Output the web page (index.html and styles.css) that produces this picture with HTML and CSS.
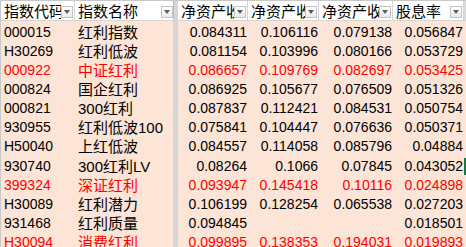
FILE: index.html
```html
<!DOCTYPE html>
<html lang="zh-CN">
<head>
<meta charset="utf-8">
<title>红利指数</title>
<link rel="stylesheet" href="styles.css">
</head>
<body>
<div class="sheet">
  <div class="row head">
    <div class="cell c1"><span class="t">指数代码</span><span class="dd"></span></div>
    <div class="cell c2"><span class="t">指数名称</span><span class="dd"></span></div>
    <div class="split"></div>
    <div class="cell num"><span class="t">净资产收益率</span><span class="dd"></span></div>
    <div class="cell num"><span class="t">净资产收益率</span><span class="dd"></span></div>
    <div class="cell num"><span class="t">净资产收益率</span><span class="dd"></span></div>
    <div class="cell num"><span class="t">股息率</span><span class="dd"></span></div>
    <div class="cell c7"></div>
  </div>

  <div class="row data">
    <div class="cell c1">000015</div><div class="cell c2">红利指数</div><div class="split"></div>
    <div class="cell num">0.084311</div><div class="cell num">0.106116</div><div class="cell num">0.079138</div><div class="cell num">0.056847</div><div class="cell c7"></div>
  </div>
  <div class="row data">
    <div class="cell c1">H30269</div><div class="cell c2">红利低波</div><div class="split"></div>
    <div class="cell num">0.081154</div><div class="cell num">0.103996</div><div class="cell num">0.080166</div><div class="cell num">0.053729</div><div class="cell c7"></div>
  </div>
  <div class="row data red">
    <div class="cell c1">000922</div><div class="cell c2">中证红利</div><div class="split"></div>
    <div class="cell num">0.086657</div><div class="cell num">0.109769</div><div class="cell num">0.082697</div><div class="cell num">0.053425</div><div class="cell c7"></div>
  </div>
  <div class="row data">
    <div class="cell c1">000824</div><div class="cell c2">国企红利</div><div class="split"></div>
    <div class="cell num">0.086925</div><div class="cell num">0.105677</div><div class="cell num">0.076509</div><div class="cell num">0.051326</div><div class="cell c7"></div>
  </div>
  <div class="row data">
    <div class="cell c1">000821</div><div class="cell c2">300红利</div><div class="split"></div>
    <div class="cell num">0.087837</div><div class="cell num">0.112421</div><div class="cell num">0.084531</div><div class="cell num">0.050754</div><div class="cell c7"></div>
  </div>
  <div class="row data">
    <div class="cell c1">930955</div><div class="cell c2">红利低波100</div><div class="split"></div>
    <div class="cell num">0.075841</div><div class="cell num">0.104447</div><div class="cell num">0.076636</div><div class="cell num">0.050371</div><div class="cell c7"></div>
  </div>
  <div class="row data">
    <div class="cell c1">H50040</div><div class="cell c2">上红低波</div><div class="split"></div>
    <div class="cell num">0.084557</div><div class="cell num">0.114058</div><div class="cell num">0.085796</div><div class="cell num">0.04884</div><div class="cell c7"></div>
  </div>
  <div class="row data">
    <div class="cell c1">930740</div><div class="cell c2">300红利LV</div><div class="split"></div>
    <div class="cell num">0.08264</div><div class="cell num">0.1066</div><div class="cell num">0.07845</div><div class="cell num">0.043052</div><div class="cell c7"><div class="sel"></div></div>
  </div>
  <div class="row data red">
    <div class="cell c1">399324</div><div class="cell c2">深证红利</div><div class="split"></div>
    <div class="cell num">0.093947</div><div class="cell num">0.145418</div><div class="cell num">0.10116</div><div class="cell num">0.024898</div><div class="cell c7"></div>
  </div>
  <div class="row data">
    <div class="cell c1">H30089</div><div class="cell c2">红利潜力</div><div class="split"></div>
    <div class="cell num">0.106199</div><div class="cell num">0.128254</div><div class="cell num">0.065538</div><div class="cell num">0.027203</div><div class="cell c7"></div>
  </div>
  <div class="row data">
    <div class="cell c1">931468</div><div class="cell c2">红利质量</div><div class="split"></div>
    <div class="cell num">0.094845</div><div class="cell num"></div><div class="cell num"></div><div class="cell num">0.018501</div><div class="cell c7"></div>
  </div>
  <div class="row data red">
    <div class="cell c1">H30094</div><div class="cell c2">消费红利</div><div class="split"></div>
    <div class="cell num">0.099895</div><div class="cell num">0.138353</div><div class="cell num">0.194031</div><div class="cell num">0.019893</div><div class="cell c7"></div>
  </div>
</div>
</body>
</html>
```

FILE: styles.css
```css
html, body {
  margin: 0;
  padding: 0;
  background: #ffffff;
  overflow: hidden;
}

body {
  font-family: "Liberation Sans", "Noto Sans CJK SC", sans-serif;
  font-size: 14px;
  color: #000000;
}

.sheet {
  width: 466px;
  border-left: 1px solid #c8c8c8;
  box-sizing: border-box;
}

.row {
  display: grid;
  grid-template-columns: 74px 98px 5px 70px 71px 74px 71px 1fr;
}

.cell {
  box-sizing: border-box;
  overflow: hidden;
  white-space: nowrap;
  min-width: 0;
}

.split {
  background: #d6d6d6;
}

/* header row */
.head {
  height: 21px;
  box-sizing: border-box;
  border-top: 1px solid #c8c8c8;
  border-bottom: 1px solid #d4d4d4;
  background: #ffffff;
}

.head .cell {
  display: flex;
  align-items: flex-start;
  border-right: 1px solid #d4d4d4;
  padding-left: 3px;
  font-size: 15px;
}

.head .c2 {
  border-right: none;
}

.head .c7 {
  border-right: none;
  background: #dadada;
}

.head .split {
  box-shadow: inset 1px 0 0 #bdbdbd;
}

.head .t {
  flex: 1;
  min-width: 0;
  overflow: hidden;
  white-space: nowrap;
  line-height: 19px;
  padding-top: 1px;
}

.dd {
  flex: none;
  box-sizing: border-box;
  width: 12px;
  height: 12px;
  margin-top: 5px;
  margin-right: 1px;
  border: 1px solid #c4c4c4;
  background: linear-gradient(#ffffff, #ebebeb);
  display: flex;
  align-items: center;
  justify-content: center;
}

.head .c2 .dd {
  margin-right: 0;
}

.dd::after {
  content: "";
  display: block;
  width: 0;
  height: 0;
  border-left: 3px solid transparent;
  border-right: 3px solid transparent;
  border-top: 4px solid #5a5a5a;
}

/* data rows */
.data {
  height: 19.08px;
  background: #fce4d6;
}

.data .cell {
  height: 19.08px;
  line-height: 19px;
  padding-top: 2px;
  padding-left: 3px;
}

.data .c2 {
  font-size: 15px;
}

.data .num {
  text-align: right;
  padding-left: 0;
  padding-right: 1px;
}

.data .c7 {
  padding: 0;
  overflow: visible;
}

.red {
  color: #ff0000;
}

.sel {
  margin-top: 3px;
  height: 17px;
  background: #217346;
}
```
